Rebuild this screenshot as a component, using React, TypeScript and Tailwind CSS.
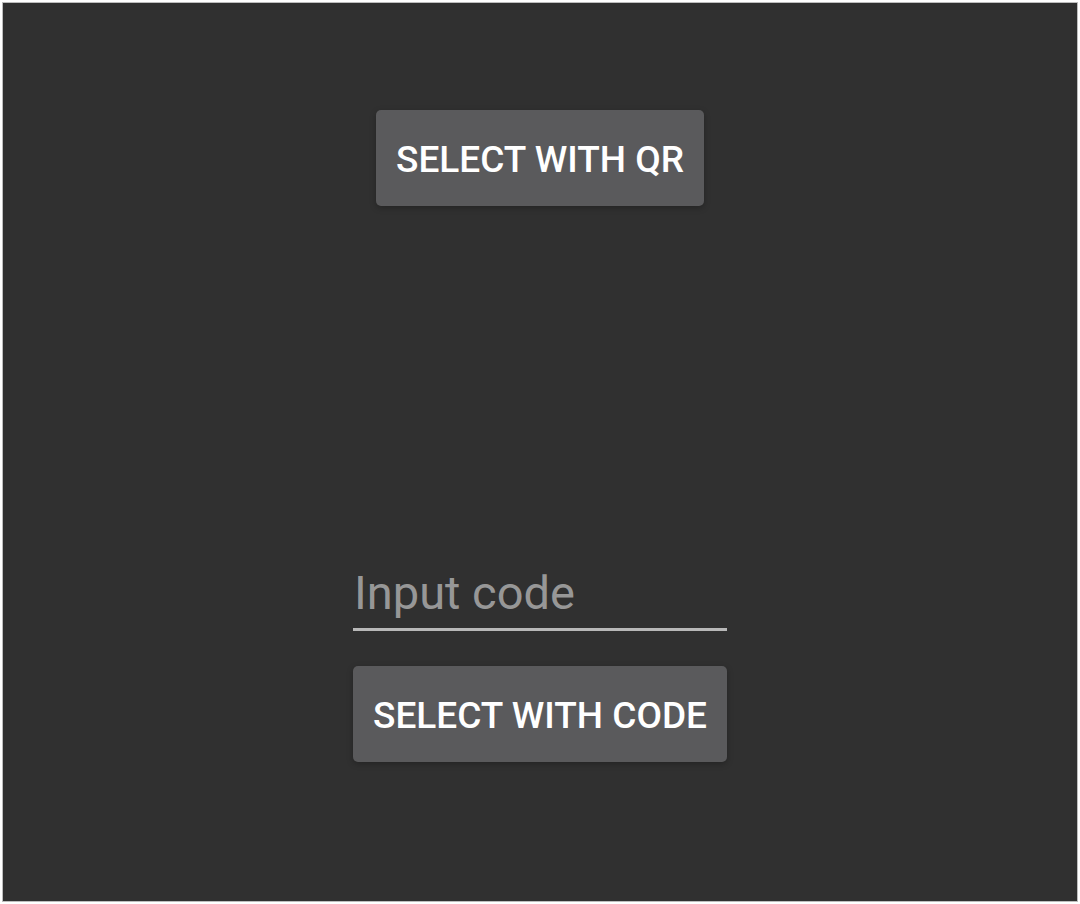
import type { ButtonHTMLAttributes } from "react";

function RaisedButton(props: ButtonHTMLAttributes<HTMLButtonElement>) {
  return (
    <button
      type="button"
      className="h-24 cursor-pointer rounded-[5px] bg-[#5a5a5c] px-5 pt-1 text-[37px] leading-[44px] font-medium whitespace-nowrap text-white uppercase shadow-[0_2px_6px_rgba(0,0,0,0.25)]"
      {...props}
    />
  );
}

export default function App() {
  return (
    <div className="flex min-h-screen bg-white p-[2px] font-['Roboto',sans-serif]">
      <main className="flex flex-1 flex-col items-center justify-between border border-[#bdbdbd] bg-[#303030] px-6 pt-[107px] pb-[139px]">
        <RaisedButton>Select with QR</RaisedButton>
        <form className="grid gap-[35px]">
          <input
            type="text"
            aria-label="Input code"
            placeholder="Input code"
            className="h-[73px] w-0 min-w-full border-b-[3px] border-[#b8b8b8] bg-transparent px-px pb-[2px] text-[47px] leading-[56px] text-white outline-none placeholder:text-[#979797]"
          />
          <RaisedButton>Select with code</RaisedButton>
        </form>
      </main>
    </div>
  );
}
